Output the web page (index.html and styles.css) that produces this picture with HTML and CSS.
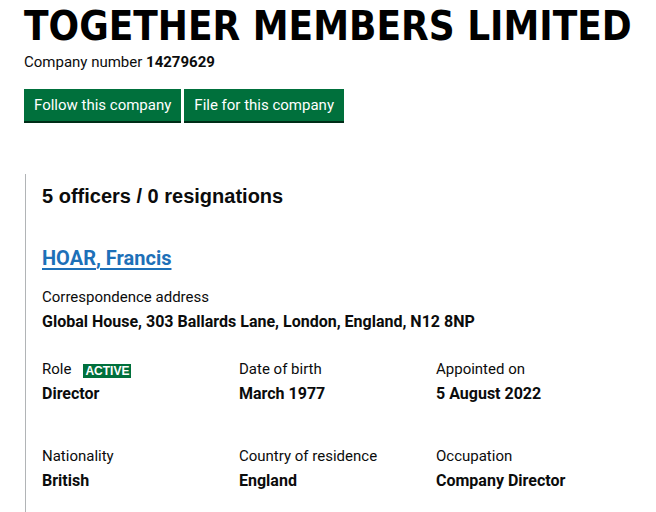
FILE: index.html
```html
<!DOCTYPE html>
<html>
<head>
<meta charset="utf-8">
<link rel="stylesheet" href="styles.css">
</head>
<body>
<div class="page">
  <h1 class="title">TOGETHER MEMBERS LIMITED</h1>
  <p class="number">Company number <strong>14279629</strong></p>
  <div class="actions">
    <a class="btn" href="#">Follow this company</a>
    <a class="btn" href="#">File for this company</a>
  </div>
  <section class="officers">
    <h2 class="count">5 officers / 0 resignations</h2>
    <h3 class="name"><a href="#">HOAR, Francis</a></h3>
    <dl class="field">
      <dt>Correspondence address</dt>
      <dd>Global House, 303 Ballards Lane, London, England, N12 8NP</dd>
    </dl>
    <div class="grid">
      <dl class="field">
        <dt>Role <span class="tag">ACTIVE</span></dt>
        <dd>Director</dd>
      </dl>
      <dl class="field">
        <dt>Date of birth</dt>
        <dd>March 1977</dd>
      </dl>
      <dl class="field">
        <dt>Appointed on</dt>
        <dd>5 August 2022</dd>
      </dl>
      <dl class="field">
        <dt>Nationality</dt>
        <dd>British</dd>
      </dl>
      <dl class="field">
        <dt>Country of residence</dt>
        <dd>England</dd>
      </dl>
      <dl class="field">
        <dt>Occupation</dt>
        <dd>Company Director</dd>
      </dl>
    </div>
  </section>
</div>
</body>
</html>
```
FILE: styles.css
```css
html, body { margin: 0; padding: 0; background: #fff; }
body { font-family: Roboto, "Liberation Sans", sans-serif; color: #0b0c0c; }
.page { padding: 0 24px; }
.title {
  font-family: "DejaVu Sans Condensed", "Liberation Sans", sans-serif;
  font-weight: 700;
  font-size: 40px;
  line-height: 44px;
  margin: 4px 0 0;
  white-space: nowrap;
  color: #000;
}
.number { margin: 4px 0 0; font-size: 15px; line-height: 20px; }
.number strong { font-weight: 700; }
.actions { display: flex; gap: 3px; margin-top: 17px; }
.btn {
  display: block;
  background: #00703c;
  color: #fff;
  text-decoration: none;
  font-size: 15px;
  line-height: 19px;
  padding: 7px 10px 6px;
  box-shadow: 0 2px 0 #002d18;
}
.officers {
  margin-top: 53px;
  border-left: 1px solid #b1b4b6;
  padding: 10px 0 40px 16px;
  margin-left: 1px;
}
.count {
  font-family: "Liberation Sans", Arial, sans-serif;
  font-size: 20px;
  line-height: 24px;
  font-weight: 700;
  margin: 0;
}
.name { margin: 38px 0 0; font-size: 20px; line-height: 24px; font-weight: 700; }
.name a { color: #1d70b8; text-decoration: underline; text-decoration-thickness: 2px; text-underline-offset: 3px; }
.field { margin: 0; }
.officers > .field { margin-top: 17px; }
.field dt { font-size: 15px; line-height: 20px; display: flex; align-items: center; gap: 12px; }
.field dd { margin: 5px 0 0; font-size: 16px; line-height: 20px; font-weight: 700; }
.grid {
  display: grid;
  grid-template-columns: 197px 197px 1fr;
  row-gap: 42px;
  margin-top: 27px;
}
.tag {
  display: inline-block;
  background: #00703c;
  color: #fff;
  font-family: "Liberation Sans", Arial, sans-serif;
  font-weight: 700;
  font-size: 12px;
  line-height: 14px;
  padding: 0 2px;
  margin-top: 4px;
}
```
